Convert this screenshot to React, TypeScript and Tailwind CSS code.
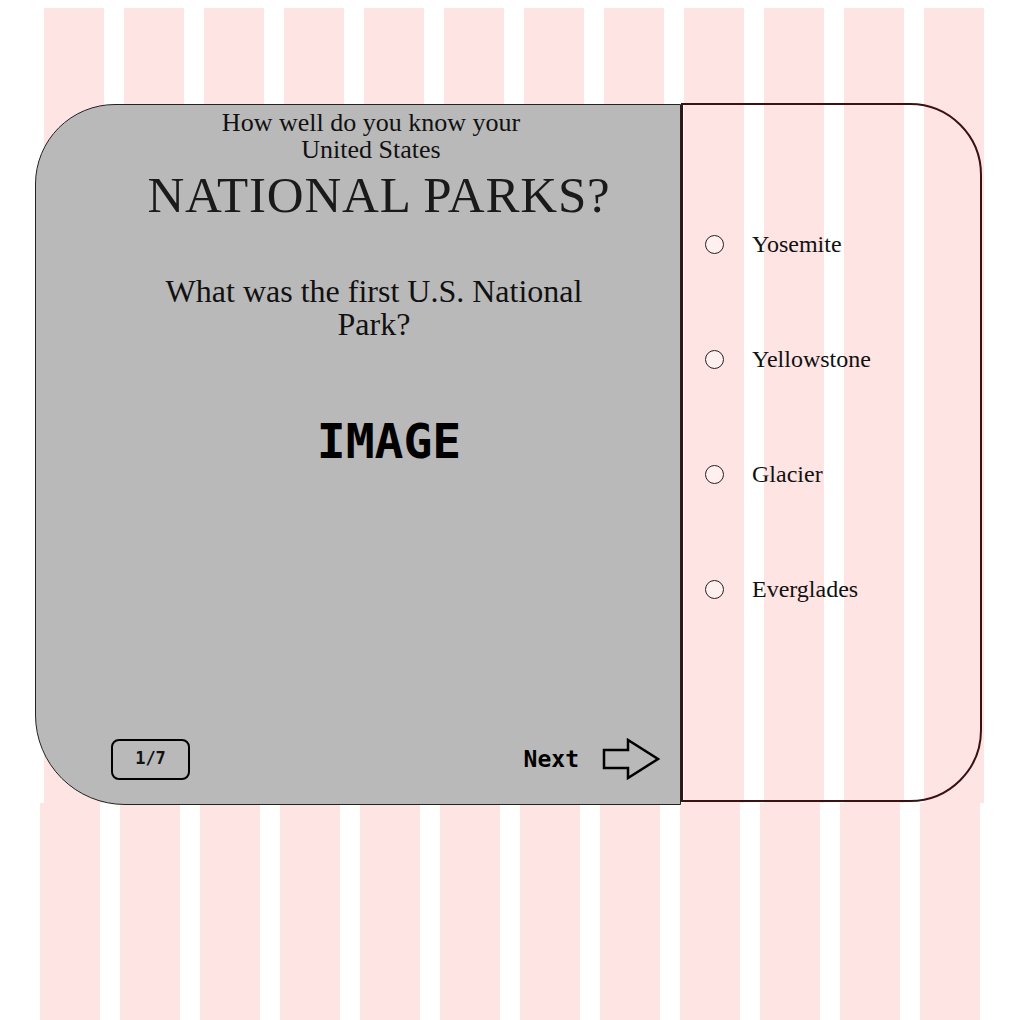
import React from "react";

const stripes = Array.from({ length: 12 }, (_, i) => i);

const options = ["Yosemite", "Yellowstone", "Glacier", "Everglades"];

function Stripes() {
  return (
    <div className="absolute inset-0 flex flex-col">
      <div className="flex gap-[20px] pl-[44px] pt-[8px] h-[803px]">
        {stripes.map((i) => (
          <div key={i} className="w-[60px] h-full bg-[#ffe4e4]" />
        ))}
      </div>
      <div className="flex gap-[20px] pl-[40px] flex-1">
        {stripes.map((i) => (
          <div key={i} className="w-[60px] h-full bg-[#ffe4e4]" />
        ))}
      </div>
    </div>
  );
}

function NextArrow() {
  return (
    <svg width="58" height="42" viewBox="0 0 58 42" fill="none">
      <path
        d="M2 12 H26 V2 L56 21 L26 40 V30 H2 Z"
        stroke="black"
        strokeWidth="2.5"
        strokeLinejoin="miter"
      />
    </svg>
  );
}

export default function App() {
  const serif = { fontFamily: '"Liberation Serif", "Times New Roman", serif' };
  const mono = { fontFamily: '"DejaVu Sans Mono", "Liberation Mono", monospace' };

  return (
    <div className="relative w-[1020px] h-[1020px] bg-white overflow-hidden">
      <Stripes />

      <div className="relative flex pt-[104px] pl-[35px]">
        {/* Question panel */}
        <div className="w-[646px] h-[701px] bg-[#b9b9b9] border border-[#222] rounded-tl-[80px] rounded-bl-[90px] flex flex-col items-center pl-[30px] pr-[4px] pb-[24px]">
          <div className="text-[26px] leading-[27px] text-[#111] text-center mt-[4px]" style={serif}>
            <div>How well do you know your</div>
            <div>United States</div>
          </div>
          <div className="text-[51px] leading-[56px] text-[#1a1a1a] mt-[4px] ml-[16px] tracking-[0.8px]" style={serif}>
            NATIONAL PARKS?
          </div>
          <div className="text-[32px] leading-[33px] text-[#111] text-center w-[460px] mt-[52px] ml-[6px]" style={serif}>
            What was the first U.S. National Park?
          </div>
          <div className="text-[48px] font-bold text-black mt-[64px] ml-[36px]" style={mono}>
            IMAGE
          </div>

          <div className="mt-auto w-full flex items-center justify-between pl-[45px] pr-[16px]">
            <div className="w-[79px] h-[41px] border-[2.5px] border-black rounded-[8px] flex items-center justify-center text-[17px] font-bold text-[#111]" style={mono}>
              1/7
            </div>
            <div className="flex items-center gap-[23px]">
              <span className="text-[23px] font-bold text-black" style={mono}>Next</span>
              <NextArrow />
            </div>
          </div>
        </div>

        {/* Answers panel */}
        <div className="w-[301px] h-[699px] -mt-[1px] border-2 border-[#3a1212] rounded-tr-[72px] rounded-br-[72px] flex flex-col pt-[126px] pl-[22px] gap-[89px]">
          {options.map((opt) => (
            <label key={opt} className="flex items-center gap-[28px]">
              <span className="w-[19px] h-[19px] rounded-full border border-[#222] bg-white/40" />
              <span className="text-[24px] leading-[26px] text-[#111]" style={serif}>{opt}</span>
            </label>
          ))}
        </div>
      </div>
    </div>
  );
}
